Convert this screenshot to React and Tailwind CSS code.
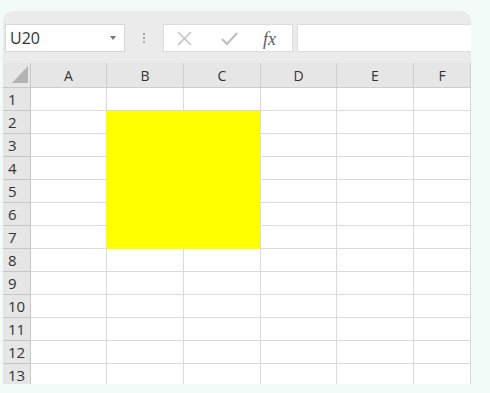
import React from "react";

const cols = ["A", "B", "C", "D", "E", "F"];
const widths = ["w-[76px]", "w-[77px]", "w-[77px]", "w-[76px]", "w-[77px]", "w-[57px]"];
const rows = Array.from({ length: 13 }, (_, i) => i + 1);

function isYellow(r, c) {
  return r >= 2 && r <= 7 && (c === 1 || c === 2);
}

export default function App() {
  return (
    <div
      className="w-[490px] h-[393px] bg-[#f3fbf8] pl-[3px] pt-[11px] overflow-hidden"
      style={{ fontFamily: '"Open Sans", "Noto Sans", sans-serif' }}
    >
      <div className="w-[468px] h-[373px] rounded-t-[10px] bg-[#ebebeb] overflow-hidden flex flex-col">
        {/* toolbar */}
        <div className="h-[52px] flex items-start pt-[13px] pl-[2px] shrink-0">
          <div className="w-[120px] h-[28px] bg-white border border-[#d6d6d6] flex items-center justify-between pl-[4px] pr-[8px]">
            <span className="text-[16px] text-[#333] leading-none">U20</span>
            <svg width="6" height="4" viewBox="0 0 6 4">
              <path d="M0 0 L6 0 L3 4 Z" fill="#777" />
            </svg>
          </div>
          <div className="w-[38px] h-[28px] flex flex-col items-center justify-center gap-[2px]">
            <div className="w-[2px] h-[2px] bg-[#a8a8a8]" />
            <div className="w-[2px] h-[2px] bg-[#a8a8a8]" />
            <div className="w-[2px] h-[2px] bg-[#a8a8a8]" />
          </div>
          <div className="w-[130px] h-[28px] bg-white border border-[#dcdcdc] flex items-center relative">
            <svg className="absolute left-[13px] top-[6px]" width="15" height="15" viewBox="0 0 15 15">
              <path d="M1 1 L14 14 M14 1 L1 14" stroke="#bdbdbd" strokeWidth="1.4" fill="none" />
            </svg>
            <svg className="absolute left-[57px] top-[7px]" width="17" height="14" viewBox="0 0 17 14">
              <path d="M1 7 L6 12 L16 1" stroke="#bdbdbd" strokeWidth="2" fill="none" />
            </svg>
            <span
              className="absolute left-[99px] top-[1px] text-[18px] italic text-[#5e5e5e]"
              style={{ fontFamily: '"Liberation Serif", serif' }}
            >
              fx
            </span>
          </div>
          <div className="w-[4px]" />
          <div className="flex-1 h-[28px] bg-white border border-[#dcdcdc] border-r-0" />
        </div>
        {/* grid */}
        <div className="flex flex-col bg-white">
          <div className="flex h-[25px] bg-[#e6e6e6]">
            <div className="w-[28px] h-full border-r border-b border-[#c8c8c8] relative bg-[#e6e6e6]">
              <svg className="absolute left-[9px] top-[3px]" width="16" height="17" viewBox="0 0 16 17">
                <path d="M16 0 L16 17 L0 17 Z" fill="#b3b3b3" />
              </svg>
            </div>
            {cols.map((c, i) => (
              <div
                key={c}
                className={`${widths[i]} h-full border-r border-b border-[#cfcfcf] flex items-center justify-center text-[14px] text-[#333] pt-[1px]`}
              >
                {c}
              </div>
            ))}
          </div>
          {rows.map((r) => (
            <div key={r} className="flex h-[23px]">
              <div className="w-[28px] h-full bg-[#e6e6e6] border-r border-b border-[#c8c8c8] flex items-center pl-[5px] text-[15px] text-[#333]">
                {r}
              </div>
              {cols.map((c, i) => {
                const y = isYellow(r, i);
                const rightY = isYellow(r, i) && isYellow(r, i + 1);
                const leftOfY = !y && isYellow(r, i + 1);
                const bottomY = y && isYellow(r + 1, i);
                return (
                  <div
                    key={c}
                    className={`${widths[i]} h-full border-r border-b ${
                      y ? "bg-[#ffff00]" : "bg-white"
                    } ${rightY || leftOfY ? "border-r-[#ffff00]" : "border-r-[#dadada]"} ${
                      bottomY || (y && r === 7) ? "border-b-[#ffff00]" : "border-b-[#dadada]"
                    }`}
                  />
                );
              })}
            </div>
          ))}
        </div>
      </div>
    </div>
  );
}
